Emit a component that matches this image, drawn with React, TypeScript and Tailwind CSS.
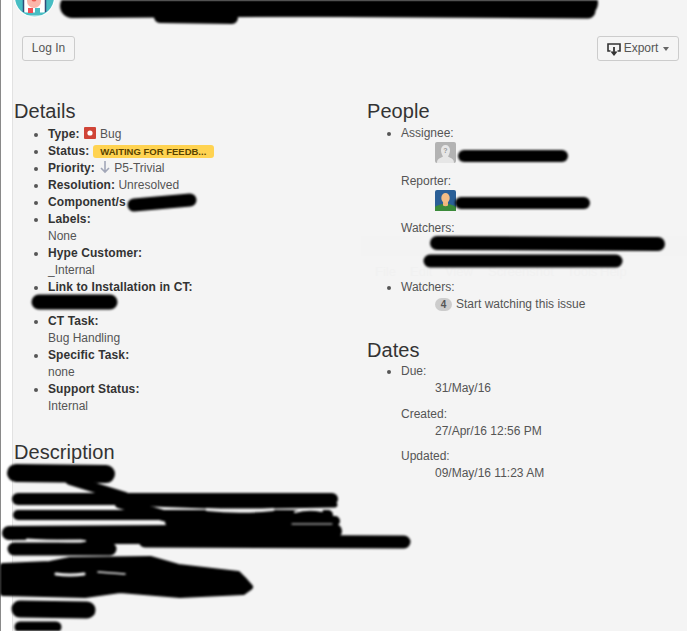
import { ReactNode } from 'react'

function BugIcon() {
  return (
    <svg width="12" height="12" viewBox="0 0 12 12" className="-my-[2px] ml-[1px] mr-[4px] inline-block align-[1px]">
      <rect width="12" height="12" rx="1" fill="#d04437" />
      <circle cx="6" cy="6" r="2.6" fill="#fff" />
    </svg>
  )
}

function ArrowIcon() {
  return (
    <svg width="12" height="14" viewBox="0 0 12 14" className="-my-[3px] ml-[1px] mr-[3px] inline-block align-[1px]">
      <path d="M6 1v11M2 8l4 4 4-4" fill="none" stroke="#a2a7b8" strokeWidth="1.6" />
    </svg>
  )
}

function ExportIcon() {
  return (
    <svg width="14" height="14" viewBox="0 0 14 14" className="shrink-0">
      <path d="M3.5 9H1V2h12v7h-2.5" fill="none" stroke="#333" strokeWidth="1.6" />
      <path d="M7 5v7M4.5 9.5 7 12.5l2.5-3" fill="none" stroke="#333" strokeWidth="1.8" />
    </svg>
  )
}

function UnknownAvatar() {
  return (
    <svg width="21" height="21" viewBox="0 0 21 21" className="shrink-0">
      <rect width="21" height="21" rx="2" fill="#b3b3b3" />
      <path d="M2 21c0-5 4-5 6-6.500C6.500 12 6 10 6 8c0-3 2-5 4.500-5S15 5 15 8c0 2-.5 4-2 6.500 2 1.500 6 1.500 6 6.500z" fill="#e6e6e6" />
      <text x="10.500" y="11" textAnchor="middle" fontSize="7" fontWeight="700" fill="#999" fontFamily="Liberation Sans">?</text>
    </svg>
  )
}

function UserAvatar() {
  return (
    <svg width="21" height="21" viewBox="0 0 21 21" className="shrink-0">
      <rect width="21" height="21" rx="2" fill="#2a5f97" />
      <path d="M0 21v-4c2-2 5-2 7-3h7c2 1 5 1 7 3v4z" fill="#3b8a3a" />
      <path d="M8 11h5v4.500c-1.500 1-3.500 1-5 0z" fill="#f0b57c" />
      <ellipse cx="10.500" cy="8" rx="4.200" ry="5" fill="#f3bd86" />
    </svg>
  )
}

function Logo() {
  return (
    <svg width="41" height="18" viewBox="0 0 41 18" className="block shrink-0">
      <circle cx="20.500" cy="-3" r="20.500" fill="#fff" />
      <circle cx="20.500" cy="-3" r="19.500" fill="#47bdc3" />
      <path d="M9.500 0v10.500a2 2 0 0 0 2 2h18a2 2 0 0 0 2-2V0" fill="#fff" />
      <path d="M9.500 0v12M31.500 0v12" stroke="#2f4d7a" strokeWidth="1.500" />
      <path d="M10 16h21" stroke="#e8f6f6" strokeWidth="1" />
      <circle cx="20" cy="1" r="7" fill="#fbb6aa" />
      <circle cx="20" cy="-1" r="2.500" fill="#ee5a50" />
      <rect x="14" y="8" width="5" height="5" fill="#ef4f55" />
      <rect x="21" y="8" width="5" height="5" fill="#47bdc3" />
    </svg>
  )
}

function Field({ label, children }: { label: string; children?: ReactNode }) {
  return (
    <li>
      <strong className="font-bold tracking-[0.1px] text-[#333]">{label}:</strong> {children}
    </li>
  )
}

function Heading({ children }: { children: ReactNode }) {
  return <h2 className="text-[20px] font-normal leading-[22px] tracking-[0.05px] text-[#333]">{children}</h2>
}

// black marker strokes over the private bits of the screenshot
const redactions: { d: string; w: number }[] = [
  { d: 'M72 6 L586 3', w: 24 },
  { d: 'M72 8 L588 11', w: 15 },
  { d: 'M160 17 L232 18', w: 12 },
  { d: 'M134 205 L190 200', w: 13 },
  { d: 'M39 302 L110 302', w: 15 },
  { d: 'M464 156 L562 156', w: 12 },
  { d: 'M461 203 L584 203', w: 12 },
  { d: 'M437 243 L658 244', w: 14 },
  { d: 'M430 261 L616 261', w: 13 },
  { d: 'M16 473 L106 474', w: 18 },
  { d: 'M70 480 L125 497', w: 10 },
  { d: 'M18 499 L332 499', w: 12 },
  { d: 'M125 503 L205 506 L275 506 L335 505', w: 5 },
  { d: 'M18 515 L328 515', w: 10 },
  { d: 'M120 503 L165 516', w: 11 },
  { d: 'M170 522 L335 521', w: 10 },
  { d: 'M9 533 L335 531', w: 14 },
  { d: 'M145 541 L404 542', w: 13 },
  { d: 'M85 541 L145 541', w: 6 },
  { d: 'M14 549 L110 549', w: 13 },
  { d: 'M20 609 L87 610', w: 17 },
  { d: 'M20 627 L56 627', w: 11 },
]

// slivers of page that show through the scribble
const gaps: { d: string; w: number }[] = [
  { d: 'M207 509.5 Q240 513 273 509.5', w: 3 },
  { d: 'M295 512 Q308 508 322 511', w: 2 },
  { d: 'M292 524 L332 524', w: 1 },
  { d: 'M27 539.5 Q55 542 85 541', w: 2 },
  { d: 'M56 574 Q70 576 84 574', w: 3 },
  { d: 'M98 572 L125 574', w: 1.5 },
]

const ghostMenu: { label: string; className: string }[] = [
  { label: 'File', className: 'left-[375px]' },
  { label: 'Edit', className: 'left-[410px]' },
  { label: 'View', className: 'left-[445px]' },
  { label: 'Screenshot', className: 'left-[488px]' },
  { label: 'Tools', className: 'left-[567px]' },
  { label: 'Help', className: 'left-[600px]' },
]

export default function App() {
  return (
    <div className="relative flex h-[631px] w-[687px] overflow-hidden bg-white font-['Liberation_Sans',Arial,sans-serif] text-[12px] leading-[17px] text-[#555]">
      {/* window edge */}
      <div className="w-[13px] shrink-0 border-l border-r border-l-[#8a8a8a] border-r-[#e2e2e2]" />

      <div className="flex-1 bg-[#f4f4f4]">
        <header className="ml-px h-[17px]">
          <Logo />
        </header>

        <div className="mt-[19px] flex justify-between pl-[9px] pr-[8px]">
          <button className="h-[25px] w-[53px] rounded-[3px] border border-[#ccc] bg-[#f5f5f5] text-[12px] text-[#555]">
            Log In
          </button>
          <button className="flex h-[25px] w-[82px] items-center justify-center gap-[3px] rounded-[3px] border border-[#ccc] bg-[#f5f5f5] text-[12px] text-[#555]">
            <ExportIcon />
            Export
            <span className="ml-[2px] h-0 w-0 border-x-[3.500px] border-t-[4px] border-x-transparent border-t-[#666]" />
          </button>
        </div>

        <div className="mt-[39px] flex">
          <section className="ml-px w-[353px] shrink-0">
            <Heading>Details</Heading>
            <ul className="mt-[3.500px] list-disc pl-[34px]">
              <Field label="Type">
                <BugIcon />
                Bug
              </Field>
              <Field label="Status">
                <span className="mt-[2px] inline-block h-[13px] w-[121px] rounded-[3px] bg-[#ffd351] text-center align-top text-[9.500px] font-bold leading-[14px] text-[#594300]">
                  WAITING FOR FEEDB...
                </span>
              </Field>
              <Field label="Priority">
                <ArrowIcon />
                P5-Trivial
              </Field>
              <Field label="Resolution">Unresolved</Field>
              <li>
                <strong className="font-bold tracking-[0.1px] text-[#333]">Component/s</strong>
              </li>
              <Field label="Labels">
                <div>None</div>
              </Field>
              <Field label="Hype Customer">
                <div>_Internal</div>
              </Field>
              <Field label="Link to Installation in CT">
                <div className="h-[17px]" />
              </Field>
              <Field label="CT Task">
                <div>Bug Handling</div>
              </Field>
              <Field label="Specific Task">
                <div>none</div>
              </Field>
              <Field label="Support Status">
                <div>Internal</div>
              </Field>
            </ul>
            <div className="mt-[26.500px]">
              <Heading>Description</Heading>
            </div>
          </section>

          <section className="flex-1">
            <Heading>People</Heading>
            <ul className="mt-[2.500px] list-disc pl-[34px]">
              <li>
                Assignee:
                <div className="pl-[34px]">
                  <UnknownAvatar />
                </div>
                <div className="mt-[10px]">Reporter:</div>
                <div className="pl-[34px]">
                  <UserAvatar />
                </div>
                <div className="mt-[9px]">Watchers:</div>
                <div className="h-[34px]" />
              </li>
              <li className="mt-[8.500px]">
                Watchers:
                <div className="flex items-center gap-[4px] pl-[34px]">
                  <span className="h-[13px] w-[17px] rounded-full bg-[#ccc] text-center text-[10px] font-bold leading-[13px] text-[#555]">
                    4
                  </span>
                  Start watching this issue
                </div>
              </li>
            </ul>
            <div className="mt-[25.500px]">
              <Heading>Dates</Heading>
            </div>
            <ul className="mt-[2.500px] list-disc pl-[34px]">
              <li>
                Due:
                <div className="pl-[34px]">31/May/16</div>
                <div className="mt-[9px]">Created:</div>
                <div className="pl-[34px]">27/Apr/16 12:56 PM</div>
                <div className="mt-[8px]">Updated:</div>
                <div className="pl-[34px]">09/May/16 11:23 AM</div>
              </li>
            </ul>
          </section>
        </div>
      </div>

      {/* faint ghost of another window showing through the capture */}
      <div className="pointer-events-none absolute left-[361px] right-0 top-[236px] h-[20px] bg-[#f2f2f2]/60" />
      {ghostMenu.map((m) => (
        <span
          key={m.label}
          className={`pointer-events-none absolute top-[264px] text-[13px] leading-[16px] text-[#f1f1f1] ${m.className}`}
        >
          {m.label}
        </span>
      ))}

      <svg
        width="687"
        height="631"
        viewBox="0 0 687 631"
        className="pointer-events-none absolute inset-0 blur-[0.8px]"
      >
        {redactions.map((r) => (
          <path key={r.d} d={r.d} fill="none" stroke="#000" strokeWidth={r.w} strokeLinecap="round" strokeLinejoin="round" />
        ))}
        {/* the big scribble low down in the description */}
        <path
          d="M3 566 L50 564 L70 560 L150 559 L178 567 L238 574 L243 579 L250 587 L243 592 L180 595 L120 590 L85 595 L3 593 Z"
          fill="#000"
          stroke="#000"
          strokeWidth="6"
          strokeLinejoin="round"
        />
        {gaps.map((g) => (
          <path key={g.d} d={g.d} fill="none" stroke="#f4f4f4" strokeWidth={g.w} strokeLinecap="round" />
        ))}
      </svg>
    </div>
  )
}
